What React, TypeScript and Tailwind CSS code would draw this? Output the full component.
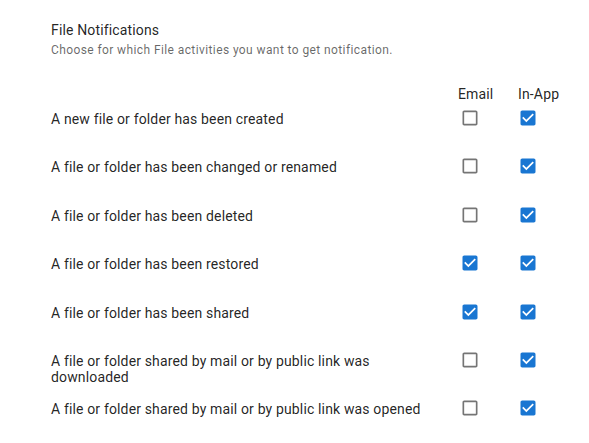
import React from "react";

type Row = { label: string; email: boolean; inApp: boolean };

const rows: Row[] = [
    { label: "A new file or folder has been created", email: false, inApp: true },
    { label: "A file or folder has been changed or renamed", email: false, inApp: true },
    { label: "A file or folder has been deleted", email: false, inApp: true },
    { label: "A file or folder has been restored", email: true, inApp: true },
    { label: "A file or folder has been shared", email: true, inApp: true },
    { label: "A file or folder shared by mail or by public link was downloaded", email: false, inApp: true },
    { label: "A file or folder shared by mail or by public link was opened", email: false, inApp: true },
];

const CheckIcon: React.FC<{ checked: boolean; className?: string }> = ({ checked, className }) => (
    <svg viewBox="0 0 24 24" className={"w-5 h-5 shrink-0 " + (checked ? "text-[#1976d2] " : "text-[#757575] ") + (className ?? "")} fill="currentColor">
        {checked ? (
            <path d="M19 3H5c-1.11 0-2 .9-2 2v14c0 1.1.89 2 2 2h14c1.11 0 2-.9 2-2V5c0-1.1-.89-2-2-2zm-9 14l-5-5 1.41-1.41L10 14.17l7.59-7.59L19 8l-9 9z" />
        ) : (
            <path d="M19 5v14H5V5h14m0-2H5c-1.1 0-2 .9-2 2v14c0 1.1.9 2 2 2h14c1.1 0 2-.9 2-2V5c0-1.1-.9-2-2-2z" />
        )}
    </svg>
);

export default function App() {
    return (
        <div className="w-[589px] h-[443px] bg-white overflow-hidden font-['Roboto','Liberation_Sans',sans-serif] text-[rgba(0,0,0,0.87)] pl-[51px] pr-[11px] pt-[20px]">
            <div className="text-[14px] leading-[20px] tracking-[0.15px]">File Notifications</div>
            <div className="text-[12px] leading-[16px] mt-[2px] tracking-[0.4px] text-[rgba(0,0,0,0.6)]">
                Choose for which File activities you want to get notification.
            </div>

            <div className="grid grid-cols-[minmax(0,1fr)_60px_60px] mt-[28px] text-[14px] leading-4 tracking-[0.15px]">
                <div />
                <div>Email</div>
                <div>In-App</div>
            </div>

            <div className="mt-[5px] flex flex-col">
                {rows.map((row) => (
                    <div key={row.label} className="grid grid-cols-[minmax(0,1fr)_60px_60px] h-[48.4px] items-start">
                        <div className="text-[14px] leading-4 tracking-[0.15px] mt-[4px] pr-2">{row.label}</div>
                        <div className="pt-[1px]">
                            <CheckIcon checked={row.email} className="ml-[1.5px]" />
                        </div>
                        <div className="pt-[1px]">
                            <CheckIcon checked={row.inApp} className="-ml-[0.5px]" />
                        </div>
                    </div>
                ))}
            </div>
        </div>
    );
}
